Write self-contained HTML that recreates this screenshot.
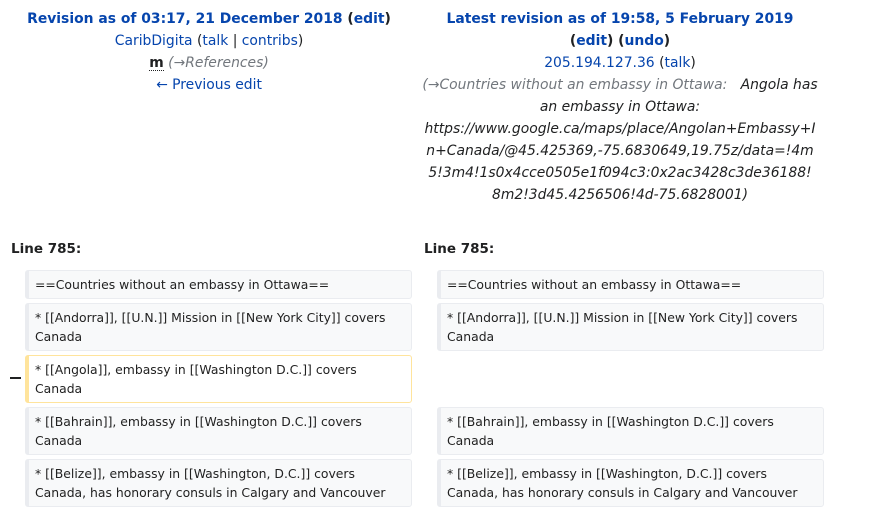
<!DOCTYPE html>
<html><head><meta charset="utf-8"><style>
body{margin:0;width:874px;height:511px;background:#fff;font-family:"DejaVu Sans",sans-serif;color:#202122;position:relative;overflow:hidden}
a{color:#0645ad;text-decoration:none}
.h{position:absolute;text-align:center;font-size:13.9px;line-height:22px}
.g{color:#72777d;font-style:italic}
.ln{position:absolute;font-weight:bold;font-size:13.5px;top:241px}
.b{position:absolute;box-sizing:border-box;width:387px;background:#f8f9fa;border:1px solid #eaecf0;border-left-width:4px;border-radius:3px;font-size:12.4px;line-height:19px;padding:4px 8px 3px 6px;color:#222}
.d{background:#fff;border-color:#ffe49c}
</style></head><body>
<div class="h" style="left:0;width:418px;top:8px">
<b><a>Revision as of 03:17, 21 December 2018</a> (<a>edit</a>)</b><br>
<a>CaribDigita</a> (<a>talk</a> | <a>contribs</a>)<br>
<b style="border-bottom:1px dotted #202122;line-height:14px;display:inline-block">m</b> <span class="g">(→References)</span><br>
<a>← Previous edit</a>
</div>
<div class="h" style="left:410px;width:420px;top:8px">
<b><a>Latest revision as of 19:58, 5 February 2019</a></b><br>
<b>(<a>edit</a>) (<a>undo</a>)</b><br>
<a>205.194.127.36</a> (<a>talk</a>)<br>
<i><span style="color:#72777d">(→Countries without an embassy in Ottawa:</span>&nbsp;&nbsp; Angola has<br>an embassy in Ottawa:<br>https://www.google.ca/maps/place/Angolan+Embassy+I<br>n+Canada/@45.425369,-75.6830649,19.75z/data=!4m<br>5!3m4!1s0x4cce0505e1f094c3:0x2ac3428c3de36188!<br>8m2!3d45.4256506!4d-75.6828001)</i>
</div>
<div class="ln" style="left:11px">Line 785:</div>
<div class="ln" style="left:424px">Line 785:</div>
<div class="b" style="left:25px;top:270px;height:29px">==Countries without an embassy in Ottawa==</div>
<div class="b" style="left:25px;top:303px;height:48px">* [[Andorra]], [[U.N.]] Mission in [[New York City]] covers Canada</div>
<div style="position:absolute;left:10px;top:377px;width:11px;height:2px;background:#202122"></div>
<div class="b d" style="left:25px;top:355px;height:48px">* [[Angola]], embassy in [[Washington D.C.]] covers Canada</div>
<div class="b" style="left:25px;top:407px;height:48px">* [[Bahrain]], embassy in [[Washington D.C.]] covers Canada</div>
<div class="b" style="left:25px;top:459px;height:48px">* [[Belize]], embassy in [[Washington, D.C.]] covers Canada, has honorary consuls in Calgary and Vancouver</div>
<div class="b" style="left:437px;top:270px;height:29px">==Countries without an embassy in Ottawa==</div>
<div class="b" style="left:437px;top:303px;height:48px">* [[Andorra]], [[U.N.]] Mission in [[New York City]] covers Canada</div>
<div class="b" style="left:437px;top:407px;height:48px">* [[Bahrain]], embassy in [[Washington D.C.]] covers Canada</div>
<div class="b" style="left:437px;top:459px;height:48px">* [[Belize]], embassy in [[Washington, D.C.]] covers Canada, has honorary consuls in Calgary and Vancouver</div>
</body></html>
